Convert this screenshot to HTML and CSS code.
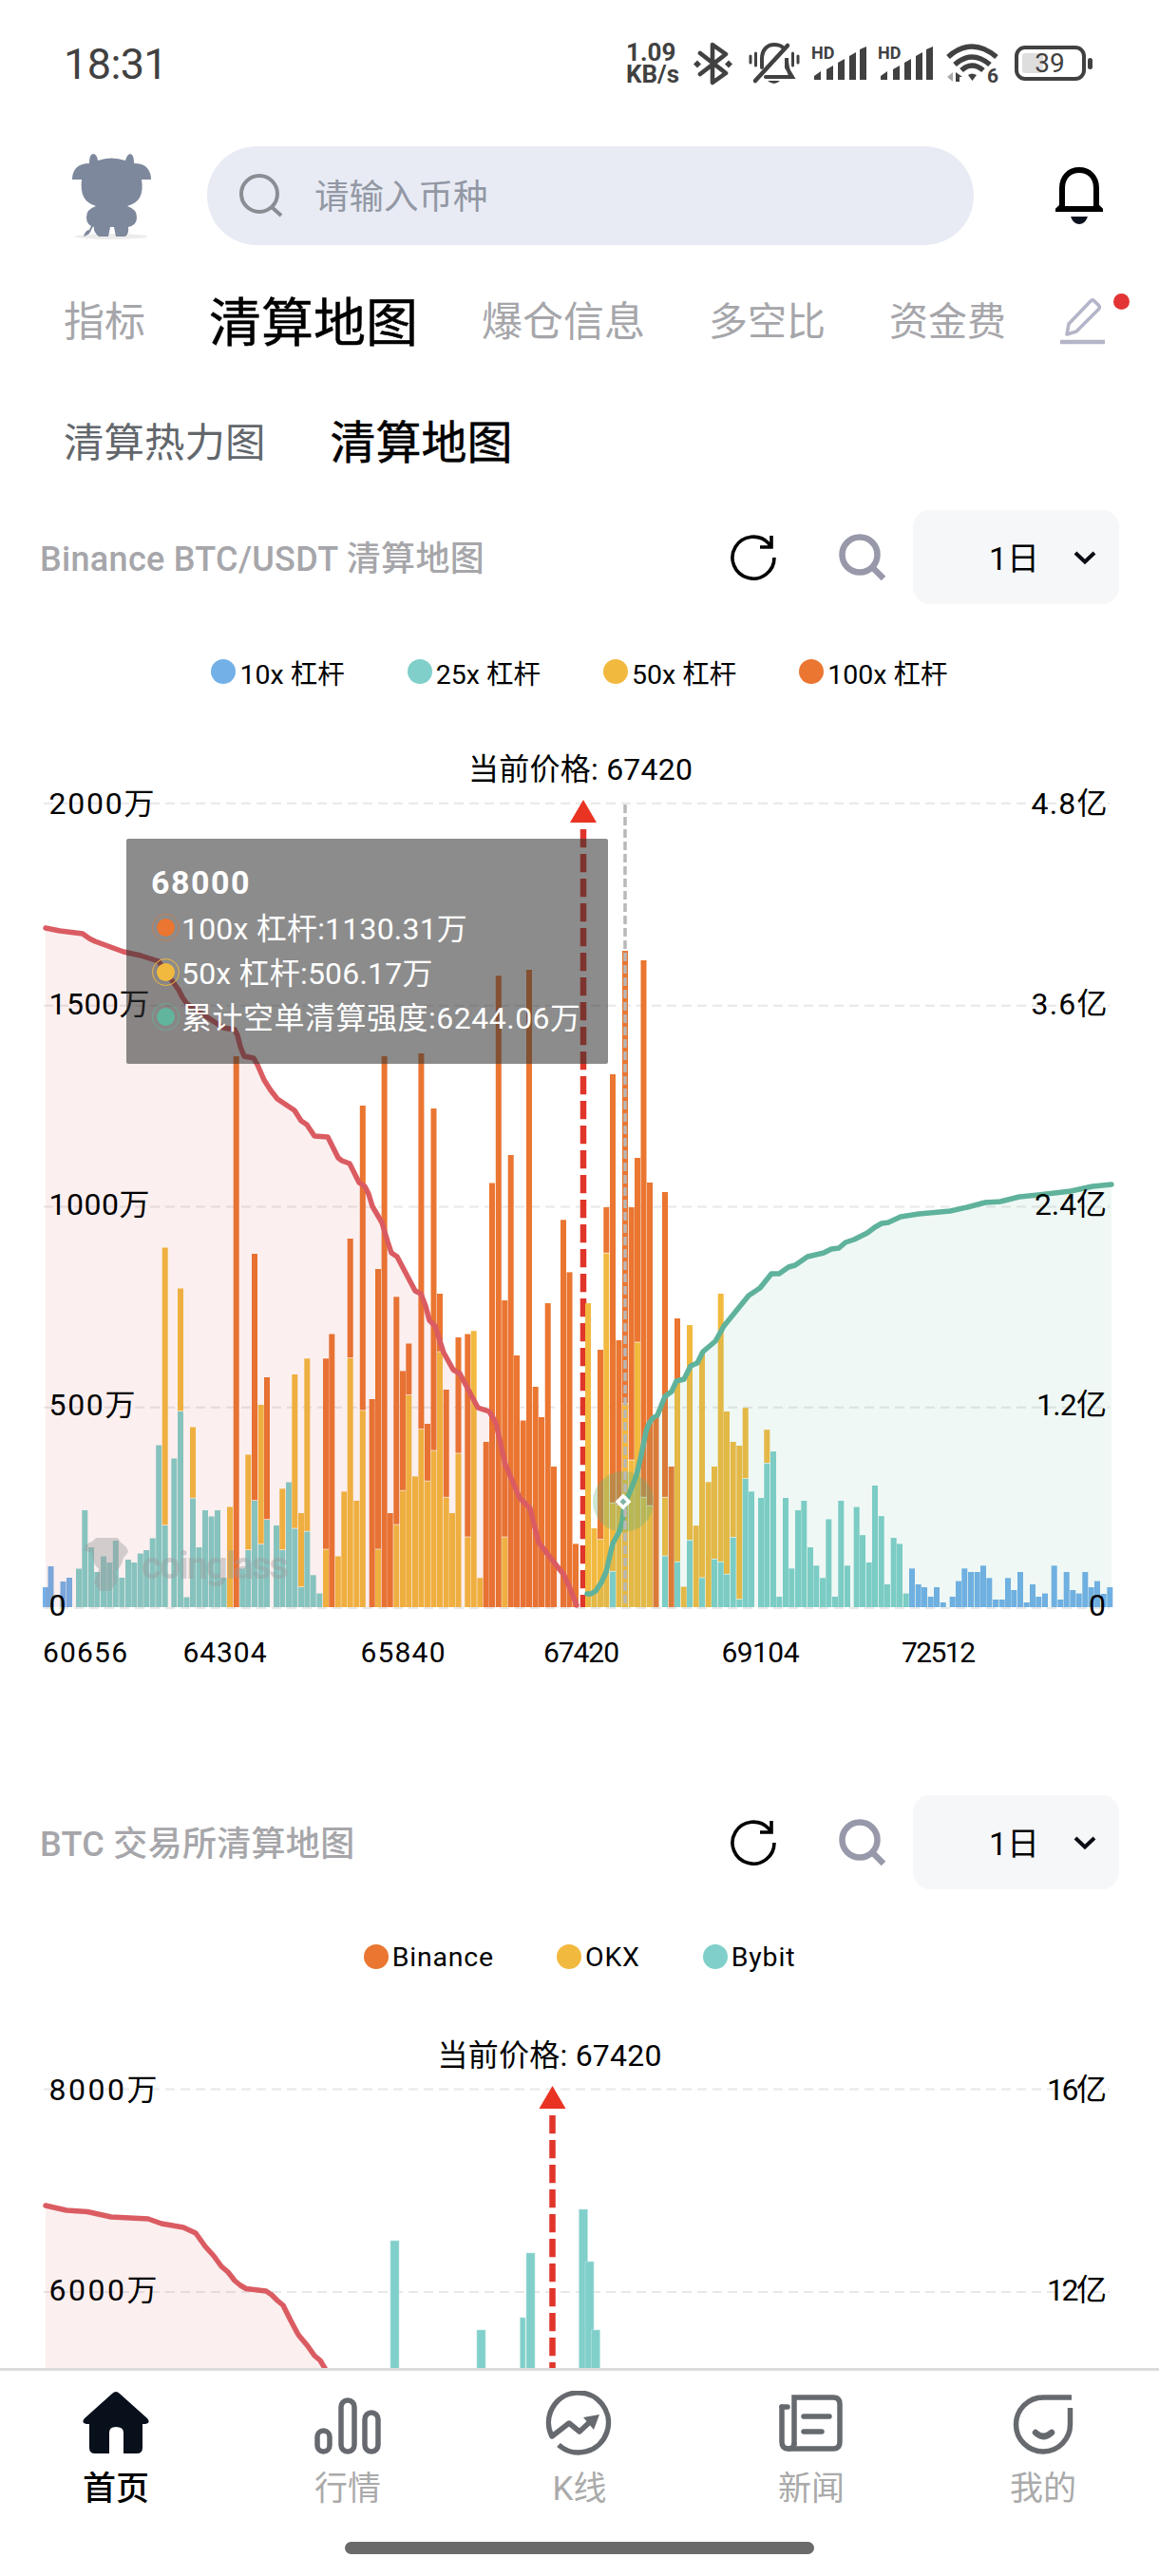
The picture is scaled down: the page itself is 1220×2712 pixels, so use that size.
FILE: index.html
```html
<!DOCTYPE html>
<html lang="zh-CN">
<head>
  <meta charset="UTF-8">
  <title>清算地图</title>
  <link rel="stylesheet" href="styles.css">
</head>
<body>
  <div class="page">
    <!-- 状态栏 -->
    <div class="status">
      <div class="time">18:31</div>
      <div class="status-icons">
        <div class="net"><span>1.09</span><span>KB/s</span></div>
        <svg class="ic-bt" width="44" height="46" viewBox="0 0 44 46" fill="none" stroke="#414141" stroke-width="4.6" stroke-linejoin="round" stroke-linecap="round">
          <path d="M8 12 L35 33 L21 43 V3 L35 13 L8 34"/>
          <path d="M5 19.500 l4 4 -4 4 -4 -4z M38 19.500 l4 4 -4 4 -4 -4z" fill="#414141" stroke="none"/>
        </svg>
        <svg class="ic-mute" width="54" height="46" viewBox="0 0 54 46" fill="none" stroke="#414141" stroke-width="4" stroke-linecap="round">
          <path d="M14 27 V18 C14 8 20 3 27 3 C31 3 34 4 36 6"/>
          <path d="M7 41 L41 4" stroke-width="4.500"/>
          <path d="M18 37 H46 L40 27 V17 C40 28 42 31 44 35"/>
          <path d="M2 15 V22 M7.500 12 V25 M46.500 12 V25 M52 15 V22" stroke-width="3"/>
          <path d="M20 41 H33 Q27 47 20 41z" fill="#414141" stroke="none"/>
        </svg>
        <svg class="ic-signal" width="60" height="40" viewBox="0 0 60 40" fill="#414141">
          <text x="0" y="15" class="hd">HD</text>
          <path d="M3 37 V33 L10 28 V37z M16 37 V26 L23 22 V37z M28 37 V19 L35 15 V37z M40 37 V12 L47 8 V37z M51 37 V5 L58 2 V37z"/>
        </svg>
        <svg class="ic-signal" width="60" height="40" viewBox="0 0 60 40" fill="#414141">
          <text x="0" y="15" class="hd">HD</text>
          <path d="M3 37 V33 L10 28 V37z M16 37 V26 L23 22 V37z M28 37 V19 L35 15 V37z M40 37 V12 L47 8 V37z M51 37 V5 L58 2 V37z"/>
        </svg>
        <svg class="ic-wifi" width="56" height="42" viewBox="0 0 56 42" fill="none" stroke="#414141" stroke-width="5.500">
          <path d="M2 14 Q27 -8 53 14"/>
          <path d="M9 22 Q27 6 46 22"/>
          <path d="M16 28 Q27 18 39 28"/>
          <path d="M23 33 Q27 30 32 33 L27.500 39z" fill="#414141" stroke="none"/>
          <path d="M1 35 L7 30 V40z" fill="#aaa" stroke="none"/>
          <path d="M10 30 L17 35 H14 V40 H10z" fill="#414141" stroke="none"/>
          <text x="43" y="41" class="wifi-gen">6</text>
        </svg>
        <svg class="ic-battery" width="84" height="38" viewBox="0 0 84 38" fill="none">
          <rect x="2" y="2" width="71" height="33" rx="9" stroke="#414141" stroke-width="4"/>
          <rect x="8" y="8" width="22" height="21" rx="3" fill="#dedede"/>
          <rect x="77" y="13" width="5" height="12" rx="2.500" fill="#414141"/>
          <text x="37" y="28" text-anchor="middle" class="battery-num">39</text>
        </svg>
      </div>
    </div>

    <!-- 顶部搜索 -->
    <div class="topbar">
      <svg class="avatar" width="98" height="98" viewBox="0 0 98 98">
        <ellipse cx="49" cy="92" rx="38" ry="3" fill="#ececec"/>
        <g fill="#7d889c">
          <path d="M26 15 Q26 5 30 5 Q34 5 35 12 Q49 7 64 12 Q66 5 69 5 Q73 5 73 15 Q83 15 87 20 Q91 25 91 32 H81 Q85 55 66 60 Q76 63 76 72 Q76 80 67 82 Q68 89 64 92 H54 L52 82 H48 L46 92 H36 Q30 87 31 82 Q23 80 23 72 Q23 63 33 60 Q15 55 18 32 H8 Q8 25 12 20 Q17 15 26 15z"/>
          <path d="M32 78 L28 85 Q27 90 20 92 Q22 85 26 85 L30 77z"/>
        </g>
      </svg>
      <div class="search">
        <svg width="46" height="46" viewBox="0 0 46 46" fill="none" stroke="#8a8d92" stroke-width="4">
          <circle cx="21" cy="21" r="19"/>
          <path d="M34 35 L44 44"/>
        </svg>
        <span>请输入币种</span>
      </div>
      <svg class="bell" width="50" height="62" viewBox="0 0 50 62">
        <path d="M7 42 V23 C7 11 15 4 25 4 C35 4 43 11 43 23 V42 L46 45 H4z" fill="none" stroke="#000" stroke-width="6"/>
        <path d="M16 53 H34 Q31 61 25 61 Q19 61 16 53z" fill="#0b111c"/>
      </svg>
    </div>

    <!-- 一级标签 -->
    <div class="tabs">
      <span>指标</span>
      <span class="active">清算地图</span>
      <span>爆仓信息</span>
      <span>多空比</span>
      <span>资金费</span>
      <div class="edit">
        <svg width="50" height="50" viewBox="0 0 50 50" fill="none" stroke="#b4b5c8" stroke-width="3.600">
          <path d="M8 39 L10 28 L33 4 Q35 2 37 4 L42 9 Q43 11 41 13 L18 36z" stroke-linejoin="round"/>
          <path d="M1 47 H48" stroke-width="4.500"/>
        </svg>
        <i class="dot-new"></i>
      </div>
    </div>

    <!-- 二级标签 -->
    <div class="subtabs">
      <span>清算热力图</span>
      <span class="active">清算地图</span>
    </div>

    <!-- Binance 清算地图 -->
    <div class="panel-head">
      <h2>Binance BTC/USDT 清算地图</h2>
      <svg class="refresh" width="48" height="48" viewBox="0 0 48 48" fill="none" stroke="#000" stroke-width="3.600">
        <path d="M46 24 A22 22 0 1 1 40 9 L42 12"/>
        <path d="M43 1 V13 H31"/>
      </svg>
      <svg class="zoom" width="50" height="50" viewBox="0 0 50 50" fill="none" stroke="#9799aa" stroke-width="6.500">
        <circle cx="22" cy="22" r="18.500"/>
        <path d="M35 35 L47 47"/>
      </svg>
      <div class="select">
        <span>1日</span>
        <svg width="24" height="16" viewBox="0 0 24 16" fill="none" stroke="#0a0d14" stroke-width="4"><path d="M2 3 L12 12.500 L22 3"/></svg>
      </div>
    </div>
    <div class="legend">
      <span><i class="blue"></i>10x 杠杆</span>
      <span><i class="teal"></i>25x 杠杆</span>
      <span><i class="yellow"></i>50x 杠杆</span>
      <span><i class="orange"></i>100x 杠杆</span>
    </div>
    <div class="chart chart-main">
      <svg id="chart1" width="1220" height="1112" viewBox="0 778 1220 1112"></svg>
      <div class="tooltip">
        <div class="tip-title">68000</div>
        <div class="tip-row"><i class="orange"></i>100x 杠杆:1130.31万</div>
        <div class="tip-row"><i class="yellow"></i>50x 杠杆:506.17万</div>
        <div class="tip-row"><i class="green"></i>累计空单清算强度:6244.06万</div>
      </div>
    </div>

    <!-- 交易所清算地图 -->
    <div class="panel-head second">
      <h2>BTC 交易所清算地图</h2>
      <svg class="refresh" width="48" height="48" viewBox="0 0 48 48" fill="none" stroke="#000" stroke-width="3.600">
        <path d="M46 24 A22 22 0 1 1 40 9 L42 12"/>
        <path d="M43 1 V13 H31"/>
      </svg>
      <svg class="zoom" width="50" height="50" viewBox="0 0 50 50" fill="none" stroke="#9799aa" stroke-width="6.500">
        <circle cx="22" cy="22" r="18.500"/>
        <path d="M35 35 L47 47"/>
      </svg>
      <div class="select">
        <span>1日</span>
        <svg width="24" height="16" viewBox="0 0 24 16" fill="none" stroke="#0a0d14" stroke-width="4"><path d="M2 3 L12 12.500 L22 3"/></svg>
      </div>
    </div>
    <div class="legend legend-ex">
      <span><i class="orange"></i>Binance</span>
      <span><i class="yellow"></i>OKX</span>
      <span><i class="teal"></i>Bybit</span>
    </div>
    <div class="chart chart-rest">
      <svg id="chart2" width="1220" height="362" viewBox="0 2131 1220 362"></svg>
    </div>

    <!-- 底部导航 -->
    <div class="nav">
      <div class="nav-item active">
        <svg width="72" height="70" viewBox="0 0 72 70">
          <path d="M36 1 Q38 1 40 3 L69 29 Q73 34 67 35 H64 V60 Q64 66 58 66 H44 V44 Q44 38 36 38 Q29 38 29 44 V66 H14 Q8 66 8 60 V35 H5 Q-1 34 3 29 L32 3 Q34 1 36 1z" fill="#08101c"/>
        </svg>
        <span>首页</span>
      </div>
      <div class="nav-item">
        <svg width="72" height="70" viewBox="0 0 72 70" fill="none" stroke="#666a6e" stroke-width="5.500">
          <rect x="4" y="42" width="13" height="22" rx="6.500"/>
          <rect x="29" y="10" width="14" height="54" rx="7"/>
          <rect x="54" y="23" width="14" height="41" rx="7"/>
        </svg>
        <span>行情</span>
      </div>
      <div class="nav-item">
        <svg width="72" height="70" viewBox="0 0 72 70" fill="none" stroke="#666a6e" stroke-width="5.500">
          <path d="M14 57 A31.500 31.500 0 1 0 7 48 L25 34 L36 43 L51 29" stroke-linejoin="round"/>
          <path d="M40 28 L57 25 L51 41z" fill="#666a6e" stroke="none"/>
        </svg>
        <span>K线</span>
      </div>
      <div class="nav-item">
        <svg width="72" height="70" viewBox="0 0 72 70" fill="none" stroke="#666a6e" stroke-width="5.500" stroke-linecap="round">
          <path d="M18 56 V7 H59 Q66 7 66 14 V54 Q66 61 59 61 H12 Q5 61 5 54 V17"/>
          <path d="M5 17 H11 M18 56 Q17 61 12 61 M28 27 H55 M28 43 H47"/>
        </svg>
        <span>新闻</span>
      </div>
      <div class="nav-item">
        <svg width="72" height="70" viewBox="0 0 72 70" fill="none" stroke="#666a6e" stroke-width="5.500">
          <path d="M66 7 H36 A28.500 28.500 0 1 0 64.500 35 V18"/>
          <path d="M28 44 Q36 52 45 44" stroke-width="6.500" stroke-linecap="round"/>
        </svg>
        <span>我的</span>
      </div>
    </div>
    <div class="home-bar"></div>
  </div>

  <script>
    const NS = "http://www.w3.org/2000/svg";
    const COLORS = { b: "#73b0e8", t: "#80cfca", y: "#f2b93f", o: "#ea7631" };

    function add(svg, tag, attrs, text) {
      const el = document.createElementNS(NS, tag);
      for (const k in attrs) el.setAttribute(k, attrs[k]);
      if (text) el.textContent = text;
      svg.appendChild(el);
      return el;
    }

    // 坐标轴文字
    function label(svg, x, y, text, len) {
      add(svg, "text", { x: x, y: y, textLength: len, class: "axis" }, text);
    }

    // 横向虚线
    function gridLine(svg, y) {
      add(svg, "line", { x1: 46, x2: 1168, y1: y, y2: y, class: "grid" });
    }

    // 堆叠柱: "x 颜色高度 颜色高度..." 高度从底部累计
    function bars(svg, data, base) {
      data.trim().split(/\s*,\s*/).forEach(item => {
        const parts = item.split(" ");
        let prev = 0;
        parts.slice(1).forEach(seg => {
          const h = parseFloat(seg.slice(1));
          add(svg, "rect", {
            x: parts[0], y: base - h, width: 6, height: Math.max(h - prev - (prev ? 0.7 : 0), 0.5),
            fill: COLORS[seg[0]]
          });
          prev = h;
        });
      });
    }

    // 累计曲线 + 面积
    function curve(svg, pts, base, stroke, fill) {
      const p = pts.trim().split(/\s+/);
      const x0 = p[0].split(",")[0];
      const x1 = p[p.length - 1].split(",")[0];
      const d = "M" + p.join(" L");
      add(svg, "path", { d: d + " L" + x1 + "," + base + " L" + x0 + "," + base + "z", fill: fill });
      add(svg, "path", { d: d, class: "curve", stroke: stroke });
    }

    // 当前价格标线
    function priceLine(svg, x, top, bottom) {
      add(svg, "line", { x1: x, x2: x, y1: top + 31, y2: bottom, class: "price" });
      add(svg, "path", { d: `M${x} ${top} l14 24 h-28z`, fill: "#e93323" });
    }

    const c1 = document.getElementById("chart1");
    [845.7, 1058.7, 1270.4, 1481.7, 1693].forEach(y => gridLine(c1, y));
    priceLine(c1, 614, 842, 1692);

    bars(c1, `
      45 b21,50.5 b43,63.5 b27,70 b31,80 t40.5,86.3 t102,93 t63,99.3 t37,106 t53.5,112.3 t47,118.8 t70,
      125.3 t31,132 t50,138.3 t47,144.8 t56.5,151.2 t60,157.7 t72.5,164.2 t170.5,170.7 t86 y378.5,
      180.3 t156.5,187 t206 y335.5,193.5 t10.5,200 t114.5 y189.5,206.5 t63,213 t102,219.6 t95.5,226 t102,
      232.5 t31,239 y105.5,245.7 o580,252.3 t40.5,258.3 t60 y160.5,265 t112 o372,271.7 t66 y213,278 t92 o242,
      288 t86,294.3 t60 y124.7,301 t131.5,307.3 t82.6 y245,314 t21 y99,320.3 t79.5 y261.7,326.7 t33.7,
      333.3 t14.5,340 y60.6 o261.7,346.3 o287.5,352.8 y53.5,359.3 y121.7,365.7 y262 o388,372.3 y112,
      378.8 y206.8 o528,388.7 o219,395 y60.7 o356,401.6 o580,407.7 o99,414.3 y86.6 o326.7,421 y122.5 o248.6,
      427.3 y223 o277.5,434 y137.6,440.4 y187 o583,447 y132.5 o193,453.5 y164.6 o525,460 y268.6 o330,
      466.7 y115.4 o229,473 y99,479.5 y161.7 o284,489.3 y73.6 o287.5,495.7 y290.8,502.3 y30.7,508.7 o174,
      515 o446.5,521.8 o664.7,528.3 y73.6 o323,534.7 o476,541 o265,547.7 o196.5,554 o671,560.7 o232,567 o200,
      573.7 o320,580 o148,590 o407.7,596.5 o352.6,603 o66.6,616 y320,622.5 y83,629 y71 o271,
      635.3 y372.5 o421,642 t37.4 y109.5 o561,648.5 y107 o281,655 y214 o691,661.7 y154.6 o421,
      668 y278.6 o473,674.5 y115.4 o681,681 y106.5 o447,687.5 o200,697 t53.6 y115.4 o437,703.7 o148,
      710 t47.4 y236 o304,716.7 y21.5,723 t70.3 y297,729.7 y85.8,736 t30.7 y268,742.7 y131.7,749 t50.3 y148,
      755.7 t47.4 y330,762 t34.4 y206,768.7 t73.3 y174,775.3 t8 y170,781.7 t135 y209.8,788 t121.7,798 t115,
      804.3 t151.3 y186.8,811 t163.9,817.3 t11,824 t115,830.3 t40.7,837 t102,843.3 t112,850 t63,856.3 t43.7,
      863 t30.7,869.3 t92.5,876 t11,882.3 t112,889 t43.7,898.7 t105.4,905 t75.8,911.7 t47,918 t128,924.7 t95.8,
      931 t24,937.7 t72.9,944 t66.6,950.7 t14.4,957 b40.7,963.7 b24,970 b21,976.7 b11,983 b21,989.7 b5,
      999.7 b11,1006 b27.4,1012.3 b40.7,1019 b37,1025.7 b37,1032 b43.7,1038.3 b30.7,1045 b8,1051.7 b8,
      1058 b30.7,1064.3 b18,1071 b37,1077.7 b5,1084 b24,1090.3 b11,1097 b14.4,1106.7 b43.7,1113.3 b8,
      1119.7 b37,1126.3 b18,1132.7 b14.4,1139.3 b37,1145.7 b21,1152 b27.4,1158.7 b14,1165.3 b21
    `, 1692);

    // 多单累计
    curve(c1, `
      48,977 63,980 87,983 94,988 100,991 130,1002 148,1006 167,1012 175,1024 188,1042 192,1050 197,1057
      220,1072 235,1082 247,1084 250,1090 253,1102 257,1112 267,1114 271,1121 278,1137 285,1148 292,1157
      310,1169 317,1180 323,1184 331,1196 345,1197 350,1207 356,1219 360,1222 368,1225 373,1235 378,1245
      384,1249 388,1257 392,1270 402,1287 408,1307 412,1319 418,1323 437,1359 443,1362 448,1375 452,1390
      458,1396 467,1424 477,1442 484,1446 503,1482 515,1486 522,1498 532,1542 547,1577 558,1588 567,1624
      588,1651 593,1657 600,1672 607,1690
    `, 1692, "#da5c62", "rgba(213, 80, 76, 0.09)");

    // 空单累计
    curve(c1, `
      618,1678 622,1678 627,1675 633,1666 638,1655 641,1642 645,1625 652,1612 655,1602 657,1585 663,1571
      670,1553 675,1532 680,1507 683,1499 687,1493 692,1490 696,1480 700,1470 707,1465 712,1454 720,1452
      727,1438 734,1435 740,1423 753,1412 757,1405 762,1396 775,1380 788,1364 800,1356 812,1341 820,1341
      830,1334 837,1332 850,1323 867,1319 875,1315 883,1314 890,1308 899,1305 913,1298 921,1292 928,1288
      935,1287 948,1281 967,1278 1000,1275 1018,1271 1037,1266 1053,1265 1073,1260 1093,1258 1127,1254
      1150,1249 1170,1247
    `, 1692, "#5fb29b", "rgba(80, 178, 145, 0.09)");

    // 水印
    const mark = add(c1, "g", { class: "watermark" });
    add(mark, "path", { d: "M97 1623 L101 1619 H124 L127 1624 Q134 1628 135 1634 L130 1640 Q128 1650 121 1655 Q127 1664 120 1670 L116 1675 H105 L99 1666 L104 1652 Q96 1645 97 1635 L88 1632 Q89 1625 97 1623z" });
    add(mark, "text", { x: 149, y: 1662, textLength: 155 }, "coinglass");

    // 十字线与高亮点
    add(c1, "circle", { cx: 656, cy: 1581, r: 32, fill: "rgba(95, 178, 120, 0.32)" });
    add(c1, "line", { x1: 658, x2: 658, y1: 847, y2: 1692, class: "cross" });
    add(c1, "path", { d: "M656 1575 l6 6 -6 6 -6 -6z", fill: "#7fb3a5", stroke: "#fff", "stroke-width": 3.5 });

    label(c1, 51.5, 856.7, "2000万", 111);
    label(c1, 51.5, 1068, "1500万", 106);
    label(c1, 51.5, 1278.6, "1000万", 106);
    label(c1, 51.5, 1489.7, "500万", 91);
    label(c1, 51.5, 1701, "0", 20);
    label(c1, 1085.5, 856.7, "4.8亿", 80);
    label(c1, 1085.5, 1068, "3.6亿", 80);
    label(c1, 1089, 1278.8, "2.4亿", 76);
    label(c1, 1091, 1489.7, "1.2亿", 74);
    label(c1, 1146, 1701, "0", 20);
    label(c1, 493, 820.7, "当前价格: 67420", 236);

    [["60656", 89.5, 89], ["64304", 236.5, 88], ["65840", 424, 89], ["67420", 612, 80], ["69104", 800.5, 82], ["72512", 988, 78]]
      .forEach(t => add(c1, "text", { x: t[1], y: 1750, textLength: t[2], "text-anchor": "middle", class: "axis-x" }, t[0]));

    // 第二个图表
    const c2 = document.getElementById("chart2");
    gridLine(c2, 2199.6);
    gridLine(c2, 2413);
    [[411, 2359], [502, 2453], [547.5, 2440], [554, 2372], [609.5, 2326], [616, 2381], [622.5, 2453]].forEach(b => {
      add(c2, "rect", { x: b[0], y: b[1], width: b[0] === 547.5 ? 5.5 : 9, height: 600, fill: COLORS.t, stroke: "#b9e5e2", "stroke-width": 0.6 });
    });
    priceLine(c2, 581.5, 2196, 2600);
    curve(c2, `
      48,2322 70,2327 92,2328.5 117,2334 156,2336 170,2341 193,2345 206,2351 211,2358 216,2365 225,2375
      233,2386 240,2392 247,2401 253,2406 259,2409.5 280,2412 286,2416 292,2422 298,2427 306,2443 314,2458
      324,2470 331,2480 337,2485 343,2495
    `, 2600, "#da5c62", "rgba(213, 80, 76, 0.09)");
    label(c2, 51.5, 2211, "8000万", 114);
    label(c2, 51.5, 2421.7, "6000万", 114);
    label(c2, 1102, 2211, "16亿", 63);
    label(c2, 1102, 2421.7, "12亿", 63);
    label(c2, 460.5, 2175, "当前价格: 67420", 236);
  </script>
</body>
</html>
```
FILE: styles.css
```css
body {
  margin: 0;
  background: #fff;
  font-family: Roboto, "Noto Sans CJK SC", sans-serif;
  color: #000;
}
.page {
  width: 1220px;
  height: 2712px;
  overflow: hidden;
  position: relative;
}
svg {
  display: block;
  flex: none;
}
/* 状态栏 */
.status {
  height: 134px;
  display: flex;
  align-items: center;
  justify-content: space-between;
  padding: 0 68px 0 67px;
}
.time {
  font-size: 45px;
  color: #414141;
  letter-spacing: -0.6px;
}
.status-icons {
  display: flex;
  align-items: center;
  color: #414141;
}
.status-icons svg {
  overflow: visible;
}
.net {
  display: flex;
  flex-direction: column;
  width: 61px;
  margin-right: 9px;
  font-weight: 700;
  font-size: 26px;
  line-height: 23px;
  white-space: nowrap;
}
.ic-mute {
  margin-left: 15px;
  margin-right: 12px;
}
.ic-signal {
  margin-right: 10px;
}
.ic-wifi {
  margin-left: 2px;
  margin-right: 16px;
}
.hd {
  font-size: 18px;
  font-weight: 700;
}
.wifi-gen {
  font-size: 21px;
  font-weight: 700;
  fill: #414141;
  stroke: none;
}
.battery-num {
  font-size: 28px;
  fill: #414141;
}
/* 搜索栏 */
.topbar {
  margin-top: 20px;
  height: 104px;
  display: flex;
  align-items: center;
  padding: 0 58px 0 68px;
}
.avatar {
  margin-right: 52px;
}
.search {
  width: 807px;
  height: 104px;
  box-sizing: border-box;
  padding-left: 34px;
  border-radius: 52px;
  background: #e8ebf4;
  display: flex;
  align-items: center;
  gap: 33px;
  font-size: 36.5px;
  color: #9298a4;
}
.search span {
  margin-top: -3px;
}
.bell {
  margin-left: 86px;
}
/* 标签 */
.tabs {
  height: 160px;
  display: flex;
  align-items: center;
  padding-left: 67px;
  font-size: 43px;
  color: #a6a6aa;
  white-space: nowrap;
}
.tabs span {
  margin-right: 67px;
  margin-top: -6px;
}
.tabs span:nth-child(4),
.tabs span:nth-child(5) {
  font-size: 41px;
}
.tabs .active {
  font-size: 55px;
  color: #000;
  -webkit-text-stroke: 0.5px #000;
}
.edit {
  position: relative;
  margin-left: -11px;
}
.dot-new {
  position: absolute;
  left: 57px;
  top: -4px;
  width: 17px;
  height: 17px;
  border-radius: 50%;
  background: #e23434;
}
.subtabs {
  height: 95px;
  display: flex;
  align-items: center;
  gap: 68px;
  padding-left: 67px;
  font-size: 42.5px;
  color: #63676c;
}
.subtabs span {
  margin-top: -7px;
}
.subtabs .active {
  font-size: 48px;
  color: #000;
  -webkit-text-stroke: 0.5px #000;
}
/* 图表标题 */
.panel-head {
  margin-top: 24px;
  height: 99px;
  display: flex;
  align-items: center;
  padding: 0 42px 0 42px;
}
.panel-head.second {
  margin-top: 0;
}
.panel-head h2 {
  flex: 1;
  margin: -3px 0 0;
  font-size: 36px;
  font-weight: 500;
  letter-spacing: 0.3px;
  color: #a6a6aa;
}
.refresh {
  margin-right: 66px;
}
.zoom {
  margin-right: 28px;
}
.select {
  width: 217px;
  height: 99px;
  box-sizing: border-box;
  padding-right: 24px;
  border-radius: 18px;
  background: #f6f7f9;
  display: flex;
  align-items: center;
  justify-content: flex-end;
  gap: 36px;
  font-size: 34px;
}
.select span {
  margin-top: -2px;
}
.legend {
  height: 142px;
  display: flex;
  align-items: center;
  justify-content: center;
  gap: 66px;
  font-size: 28.5px;
}
.legend-ex {
  letter-spacing: 0.8px;
}
.legend span {
  display: flex;
  align-items: center;
  gap: 4px;
}
.legend i {
  width: 26px;
  height: 26px;
  border-radius: 50%;
}
.blue { background: #73b0e8; }
.teal { background: #80cfca; }
.yellow { background: #f2b93f; }
.orange { background: #ea7631; }
.green { background: #61b59d; }
/* 图表 */
.chart {
  position: relative;
}
.chart-main {
  height: 1112px;
}
.chart-rest {
  height: 362px;
  overflow: hidden;
}
.grid {
  stroke: #e8e8e8;
  stroke-width: 2;
  stroke-dasharray: 10 6;
}
.price {
  stroke: #e0352a;
  stroke-width: 6.5;
  stroke-dasharray: 19.3 6.7;
}
.cross {
  stroke: #b8b8b8;
  stroke-width: 3.5;
  stroke-dasharray: 9 4;
}
.curve {
  fill: none;
  stroke-width: 5.5;
  stroke-linejoin: round;
  stroke-linecap: round;
}
.axis {
  font-size: 32px;
}
.axis-x {
  font-size: 30px;
}
.watermark {
  fill: #999;
  opacity: 0.4;
  font-size: 40px;
  font-weight: 700;
}
/* 提示框 */
.tooltip {
  position: absolute;
  left: 133px;
  top: 105px;
  width: 507px;
  height: 237px;
  box-sizing: border-box;
  padding: 22px 0 0 26px;
  border-radius: 2px;
  background: rgba(50, 50, 50, 0.56);
  color: #fff;
  font-size: 32px;
  letter-spacing: 0.5px;
  white-space: nowrap;
}
.tip-title {
  height: 46px;
  line-height: 48px;
  font-size: 34px;
  font-weight: 700;
  letter-spacing: 1.5px;
}
.tip-row {
  height: 47px;
  display: flex;
  align-items: center;
}
.tip-row:nth-child(2),
.tip-row:nth-child(3) {
  letter-spacing: 0.2px;
}
.tip-row i {
  width: 19px;
  height: 19px;
  margin: 3px 7px 0 6px;
  border-radius: 50%;
  position: relative;
}
.tip-row i::after {
  content: "";
  position: absolute;
  inset: -5px;
  border: 1.5px solid #f2b93f;
  border-radius: 50%;
}
.tip-row i.orange::after { border-color: rgba(234, 118, 49, 0.6); }
.tip-row i.green::after { border-color: rgba(97, 181, 157, 0.8); }
/* 底部导航 */
.nav {
  height: 219px;
  box-sizing: border-box;
  border-top: 3px solid #dcdcdc;
  background: #fff;
  display: flex;
}
.nav-item {
  flex: 1;
  padding-top: 21px;
  display: flex;
  flex-direction: column;
  align-items: center;
  font-size: 35px;
  line-height: 50px;
  color: #aaa;
}
.nav-item span {
  margin-top: 9px;
}
.nav-item.active {
  color: #000;
  font-weight: 500;
}
.home-bar {
  position: absolute;
  left: 363px;
  bottom: 23px;
  width: 494px;
  height: 13px;
  border-radius: 7px;
  background: #6a6a6a;
}
```
